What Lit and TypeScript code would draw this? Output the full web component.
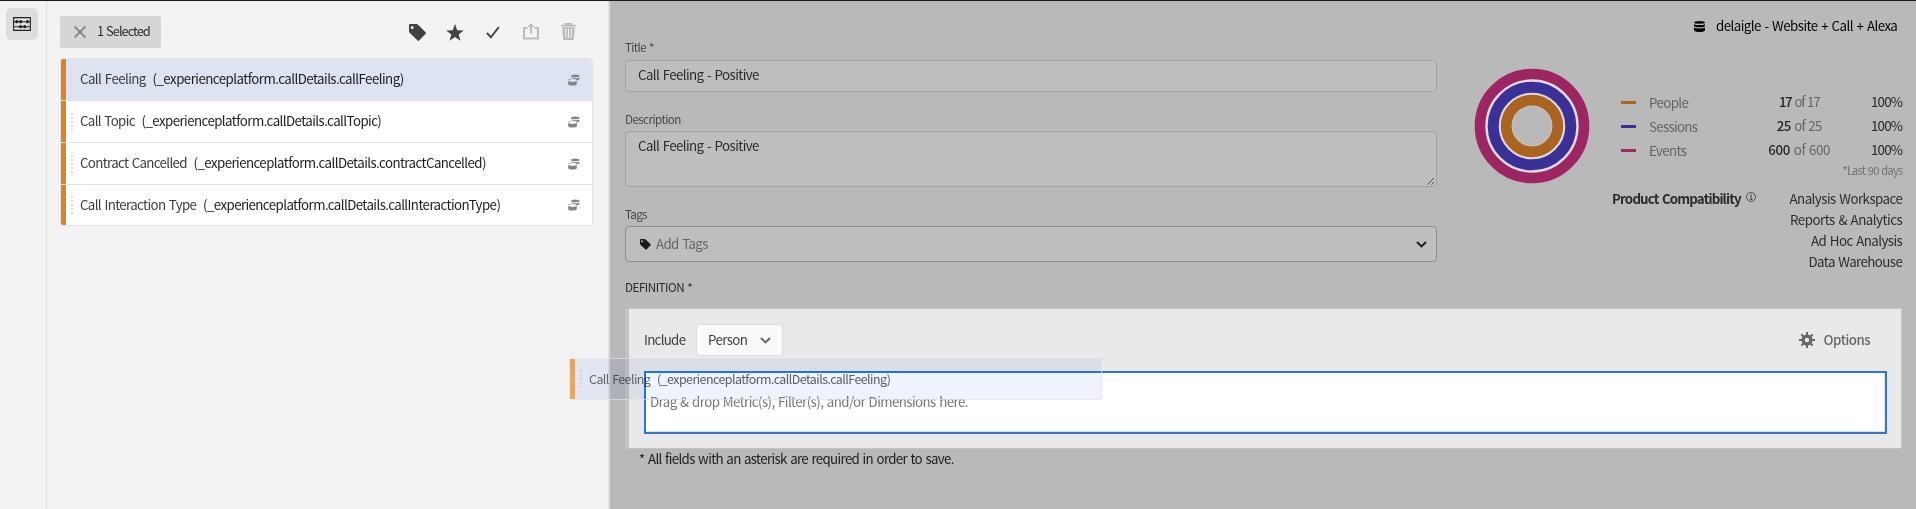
import { LitElement, html, svg, css } from "lit";
import { customElement, property } from "lit/decorators.js";

/** A single-line label whose tracking is adjusted to occupy `w` pixels. */
@customElement("fit-label")
export class FitLabel extends LitElement {
  static styles = css`
    :host { display: block; white-space: pre; flex: none; }
    span { display: inline-block; word-spacing: 1.1px; }
  `;
  @property() text = "";
  @property({ type: Number }) w = 0;
  firstUpdated() {
    const s = this.renderRoot.querySelector("span")!;
    const natural = s.getBoundingClientRect().width;
    s.style.letterSpacing = `${(this.w - natural + 0.3) / this.text.length}px`;
    s.style.width = `${this.w}px`;
  }
  render() {
    return html`<span>${this.text}</span>`;
  }
}

const label = (text: string, w: number, cls = "") =>
  html`<fit-label class=${cls} .text=${text} .w=${w}></fit-label>`;

const tagShape = svg`<path fill-rule="evenodd" d="M0 1.2Q0 0 1.2 0H7.4Q8.2 0 8.8 .6L16.6 8.2Q17.3 9 16.6 9.8L10.2 16.6Q9.4 17.3 8.6 16.6L.6 8.8Q0 8.2 0 7.4ZM3.2 1.9A1.5 1.5 0 1 0 3.2 4.9A1.5 1.5 0 1 0 3.2 1.9Z"/>`;

const icons = {
  abacus: html`<svg width="18" height="14" viewBox="0 0 18 14"><path d="M.6.6H17.4V13.4H.6ZM.6 4.8H17.4M.6 9.7H17.4" fill="none" stroke="#222" stroke-width="1.1"/><g fill="#222"><circle cx="3.8" cy="4.7" r="1.6"/><circle cx="7.7" cy="4.7" r="1.6"/><circle cx="14.5" cy="4.7" r="1.6"/><circle cx="7.7" cy="9.7" r="1.6"/><circle cx="11.7" cy="9.7" r="1.6"/></g></svg>`,
  close: html`<svg width="12" height="12" viewBox="0 0 12 12"><path d="M.7.7L11.3 11.3M11.3.7L.7 11.3" stroke="#7e7e7e" stroke-width="1.7"/></svg>`,
  tag: html`<svg width="17" height="17" viewBox="0 0 17 17" fill="#424242">${tagShape}</svg>`,
  star: html`<svg width="18" height="17" viewBox="0 0 18 17"><path fill="#424242" d="M9 0L11.2 6.2L17.8 6.4L12.6 10.5L14.5 16.8L9 13.1L3.5 16.8L5.4 10.5L.2 6.4L6.8 6.2Z"/></svg>`,
  check: html`<svg width="14" height="13" viewBox="0 0 14 13"><path d="M1 7L4.9 11.3L12.9 1" fill="none" stroke="#424242" stroke-width="2"/></svg>`,
  share: html`<svg width="16" height="17" viewBox="0 0 16 17"><path d="M4.5 4.9H1V15.4H15V4.9H11.5" fill="none" stroke="#bcbcbc" stroke-width="2"/><path d="M8 10.5V3" stroke="#bcbcbc" stroke-width="2"/><path d="M8 0L11.5 4H4.5Z" fill="#bcbcbc"/></svg>`,
  trash: html`<svg width="15" height="17" viewBox="0 0 15 17"><path d="M0 2.6H15M4.6 2V.7H10.4V2" fill="none" stroke="#bababa" stroke-width="1.6"/><path fill="#bababa" fill-rule="evenodd" d="M1.2 4.2H13.8L12.8 16.2Q12.7 17 12 17H3Q2.3 17 2.2 16.2ZM3.9 5.8L4.5 15H5.5L5 5.8ZM6.9 5.8V15H8.1V5.8ZM10 5.8L9.5 15H10.5L11.1 5.8Z"/></svg>`,
  stack: html`<svg width="12" height="12" viewBox="0 0 12 12"><g fill="#858585"><path d="M2.9 2Q3.1.4 7.1.4Q11.5.4 11.5 1.9Q11.5 3.3 7.1 3.3Q2.9 3.3 2.9 2Z"/><path d="M11.5 3.4V5Q11 6.4 8.9 6.6Q8.6 5.3 5.8 4.9L3 4.3V3.5Q4.2 4.3 7.1 4.3Q10.5 4.3 11.5 3.4Z"/><path d="M.2 6.1Q.6 4.9 2.2 4.9L2.6 6Z"/><path d="M.2 6.8Q1.4 7.9 4.4 7.9Q7.8 7.9 8.8 6.8V10.2Q8.4 11.6 4.4 11.6Q.6 11.6.2 10.2Z"/></g></svg>`,
  tagSmall: html`<svg width="11" height="11" viewBox="0 0 17.2 17.2" fill="#1c1c1c">${tagShape}</svg>`,
  chevronDark: html`<svg width="11" height="7" viewBox="0 0 11 7"><path d="M1 1L5.5 5.4L10 1" fill="none" stroke="#1d1d1d" stroke-width="1.9"/></svg>`,
  chevron: html`<svg width="11" height="7" viewBox="0 0 11 7"><path d="M1 1L5.5 5.4L10 1" fill="none" stroke="#6a6a6a" stroke-width="2"/></svg>`,
  database: html`<svg width="11" height="11" viewBox="0 0 11 11"><g fill="#060606"><path d="M0 1.6Q0 0 5.5 0T11 1.6Q11 2.8 5.5 2.8T0 1.6Z"/><path d="M0 3.2Q1.5 4.1 5.5 4.1T11 3.2V5Q10.5 6.3 5.5 6.3T0 5Z"/><path d="M0 6.6Q1.5 7.5 5.5 7.5T11 6.6V9.2Q10.5 11 5.5 11T0 9.2Z"/></g></svg>`,
  info: html`<svg width="10" height="10" viewBox="0 0 10 10"><circle cx="5" cy="5" r="4.5" fill="none" stroke="#3d3d3d" stroke-width=".8"/><path d="M3.9 4.3H5.2V7.4M3.7 7.5H6.5" stroke="#3d3d3d" stroke-width=".9" fill="none"/><circle cx="5" cy="2.7" r=".7" fill="#3d3d3d"/></svg>`,
  gear: html`<svg width="16" height="16" viewBox="0 0 16 16"><g fill="#686868"><path fill-rule="evenodd" d="M8 2.4A5.6 5.6 0 1 0 8 13.6A5.6 5.6 0 1 0 8 2.4ZM8 5.8A2.2 2.2 0 1 1 8 10.2A2.2 2.2 0 1 1 8 5.8Z"/>${[0, 45, 90, 135].map(
    (a) => svg`<path transform=${`rotate(${a} 8 8)`} d="M7 0H9V3H7ZM7 13H9V16H7Z"/>`
  )}</g></svg>`,
  grip: html`<svg width="2" height="18" viewBox="0 0 2 18"><path d="M1 0V18" stroke="#dcdcdc" stroke-width="2" stroke-dasharray="2 2"/></svg>`,
  resize: html`<svg width="8" height="8" viewBox="0 0 8 8"><path d="M.5 7.5L7 1M4.5 7.5L7 5" stroke="#454545" stroke-width=".9"/></svg>`,
};

interface Dim { name: string; nw: number; path: string; pw: number; selected?: boolean }

const dims: Dim[] = [
  { name: "Call Feeling", nw: 65.5, path: "(_experienceplatform.callDetails.callFeeling)", pw: 251, selected: true },
  { name: "Call Topic", nw: 54.5, path: "(_experienceplatform.callDetails.callTopic)", pw: 239.5 },
  { name: "Contract Cancelled", nw: 106.5, path: "(_experienceplatform.callDetails.contractCancelled)", pw: 292 },
  { name: "Call Interaction Type", nw: 116, path: "(_experienceplatform.callDetails.callInteractionType)", pw: 297 },
];

const metrics = [
  { cls: "people", name: "People", w: 39, n: "17", nw: 11.5, of: "of 17", ow: 24.5 },
  { cls: "sessions", name: "Sessions", w: 48, n: "25", nw: 13.5, of: "of 25", ow: 27 },
  { cls: "events", name: "Events", w: 37, n: "600", nw: 21.5, of: "of 600", ow: 36 },
];

const products: [string, number][] = [
  ["Analysis Workspace", 112.5],
  ["Reports & Analytics", 112],
  ["Ad Hoc Analysis", 91],
  ["Data Warehouse", 93.5],
];

@customElement("app-root")
export class AppRoot extends LitElement {
  static styles = css`
    :host {
      display: flex; position: relative; box-sizing: border-box;
      width: 1916px; height: 509px; overflow: hidden;
      border-top: 1px solid #1e1b1e; background: #f3f3f3; color: #2c2c2c;
      font: 13.3px/18px "Noto Sans CJK SC", "Noto Sans", sans-serif;
    }
    * { box-sizing: border-box; }
    svg { display: block; flex: none; }
    .rail { width: 47px; border-right: 1px solid #dfdfdf; padding: 7px 0 0 6px; flex: none; }
    .railbtn { width: 32px; height: 32px; border-radius: 5px; background: #dedede; display: grid; place-items: center; }
    .panel { width: 561px; padding: 15px 15px 0 13px; flex: none; }
    .tools { display: flex; height: 32px; margin-bottom: 10px; align-items: center; }
    .chip { display: flex; align-items: center; width: 101px; height: 32px; padding-left: 14px; gap: 11px; background: #d6d6d6; border-radius: 3px; }
    .chip fit-label { margin-top: -2px; font-size: 12.8px; }
    .actions { display: flex; margin-left: 248px; align-items: center; }
    .actions svg:nth-child(2) { margin-left: 20px; }
    .actions svg:nth-child(3) { margin-left: 22px; }
    .actions svg:nth-child(4) { margin: -1px 0 0 23px; }
    .actions svg:nth-child(5) { margin: -1px 0 0 22px; }
    .list { border: 1px solid #e3e3e3; border-radius: 3px; overflow: hidden; background: #fff; width: 533px; }
    .row { display: flex; align-items: center; height: 42px; padding-right: 12px; border-bottom: 1px solid #e3e3e3; background: #fff; }
    .row:last-child { height: 40px; border-bottom: 0; }
    .bar { width: 5px; height: 41px; align-self: flex-start; background: #e08029; margin-right: 5px; flex: none; }
    .row.sel { background: #dde3f1; }
    .row > svg:last-child { margin-left: auto; }
    .name { margin-left: 7px; margin-right: 7px; margin-top: -1px; color: #3c3c3c; }
    .path { margin-top: -1px; color: #1c1c1c; }
    .main { width: 1308px; border-left: 2px solid #dedede; background: #b9b9b9; padding: 0 14px 0 15px; flex: none; }
    .top { display: grid; grid-template-columns: 812px 1fr; height: 276px; }
    .form { padding-top: 38px; }
    .lab { font-size: 11.6px; line-height: 16px; color: #474747; }
    .field { border: 1px solid #a2a2a2; border-radius: 4px; background: #bebebe; padding-left: 12px; color: #2b2b2b; }
    .title { height: 32px; margin: 5px 0 19px; padding-top: 5px; }
    .area { height: 56px; margin: 4px 0 19px; padding: 5px 1px 1px 12px; display: flex; justify-content: space-between; }
    .area svg { align-self: flex-end; }
    .tags { height: 36px; margin-top: 4px; border-color: #8d8d8d; display: flex; align-items: center; padding: 0 9px 0 14px; }
    .tags fit-label { margin: -1px auto 0 5px; color: #676767; }
    .deflab { font-size: 11.6px; line-height: 16px; margin-top: 2px; color: #2b2b2b; }
    .side { display: grid; grid-template-columns: 170px 1fr; grid-template-rows: 54px 1fr; }
    .suite { grid-column: 1 / 3; display: flex; justify-content: flex-end; align-items: center; gap: 11px; height: 32px; margin-top: 10px; padding-right: 5px; color: #060606; }
    .suite fit-label { margin-top: -2px; }
    .suite svg { margin-top: -2px; }
    .rings { margin: 13px 0 0 37px; }
    .stats { padding-top: 36px; }
    .metric { display: flex; align-items: center; height: 24px; }
    .dash { width: 15px; height: 3px; margin: -1px 13px 0 14px; flex: none; }
    .people .dash { background: #ae6521; }
    .sessions .dash { background: #3a3098; }
    .events .dash { background: #a32766; }
    .metric .mname { color: #646464; width: 91px; margin-right: auto; }
    .vals { display: flex; gap: 4px; justify-content: center; width: 90px; margin: -2px 27px 0 0; color: #666; }
    .vals .num, .pct { color: #242424; font-weight: 500; }
    .pct { margin-top: -2px; font-weight: 400; }
    .foot { display: flex; justify-content: flex-end; font-size: 11.2px; line-height: 16px; color: #717171; margin-top: -1px; }
    .compat { display: flex; margin: 12px 0 0 5px; }
    .compat b { font-weight: 700; color: #2b2b2b; }
    .compat svg { margin: 2px 0 0 5px; }
    .prods { display: flex; flex-direction: column; align-items: flex-end; gap: 3px; margin-left: auto; }
    .def { border: 1px solid #c3c3c3; border-left-width: 4px; background: #e9e9e9; width: 1277px; height: 141px; margin-top: 13px; padding: 15px 14px 14px 15px; }
    .inc { display: flex; align-items: center; height: 32px; margin-bottom: 15px; color: #3d3d3d; }
    .inc > fit-label { margin-top: -1px; }
    .person { display: flex; align-items: center; width: 87px; height: 32px; background: #fafafa; border: 1px solid #dcdcdc; border-radius: 4px; padding: 0 11px; margin-left: 11px; justify-content: space-between; }
    .person fit-label { margin-top: -1px; }
    .opt { display: flex; gap: 9px; margin: 0 17px 0 auto; align-items: center; color: #666; font-weight: 500; }
    .opt fit-label { margin-top: -1px; }
    .drop { border: 2px solid #2f77cb; background: #fff; height: 63px; padding: 20px 0 0 4px; color: #757575; box-shadow: inset -1px -1px #e1e1e1; }
    .note { margin: 1px 0 0 14px; color: #1b1b1b; }
    .ghost { position: absolute; left: 569px; top: 357px; width: 533px; height: 42px; border: 1px solid rgba(222, 224, 225, .7); border-radius: 3px; }
    .ghost .row { height: 40px; border: 0; background: #eff3fd; font-size: 12.4px; mix-blend-mode: multiply; }
    .ghost .bar { background: #f3ad6b; height: 40px; }
    .ghost .name { margin-top: -1px; color: #6c6c6c; }
    .ghost .path { margin-top: -1px; color: #5c5c5c; }
  `;

  render() {
    return html`
      <nav class="rail"><div class="railbtn">${icons.abacus}</div></nav>
      <section class="panel">
        <div class="tools">
          <div class="chip">${icons.close}${label("1 Selected", 52.5)}</div>
          <div class="actions">${icons.tag}${icons.star}${icons.check}${icons.share}${icons.trash}</div>
        </div>
        <div class="list">
          ${dims.map(
            (d) => html`<div class="row ${d.selected ? "sel" : ""}">
              <div class="bar"></div>${icons.grip}${label(d.name, d.nw, "name")}${label(d.path, d.pw, "path")}${icons.stack}
            </div>`
          )}
        </div>
      </section>
      <main class="main">
        <div class="top">
          <div class="form">
            ${label("Title *", 28.5, "lab")}
            <div class="field title">${label("Call Feeling - Positive", 120.5)}</div>
            ${label("Description", 55.5, "lab")}
            <div class="field area">${label("Call Feeling - Positive", 120.5)}${icons.resize}</div>
            ${label("Tags", 21.5, "lab")}
            <div class="field tags">${icons.tagSmall}${label("Add Tags", 51.5)}${icons.chevronDark}</div>
          </div>
          <aside class="side">
            <div class="suite">${icons.database}${label("delaigle - Website + Call + Alexa", 181)}</div>
            <svg class="rings" width="116" height="116" viewBox="0 0 116 116" fill="none">
              <circle cx="58" cy="58" r="46" stroke="#dcdcdc" stroke-width="4" />
              <circle cx="58" cy="58" r="32.5" stroke="#dcdcdc" stroke-width="4" />
              <circle cx="58" cy="58" r="20.4" stroke="#c6c6c6" stroke-width="2" />
              <circle cx="58" cy="58" r="52" stroke="#9d2662" stroke-width="10.6" />
              <circle cx="58" cy="58" r="38.8" stroke="#3a3098" stroke-width="11" />
              <circle cx="58" cy="58" r="25.8" stroke="#ab6320" stroke-width="10.8" />
            </svg>
            <div class="stats">
              ${metrics.map(
                (m) => html`<div class="metric ${m.cls}">
                  <div class="dash"></div>${label(m.name, m.w, "mname")}
                  <div class="vals">${label(m.n, m.nw, "num")}${label(m.of, m.ow)}</div>
                  ${label("100%", 31, "pct")}
                </div>`
              )}
              <div class="foot">${label("*Last 90 days", 59.5)}</div>
              <div class="compat">
                <b>${label("Product Compatibility", 128.5)}</b>${icons.info}
                <div class="prods">${products.map(([p, w]) => label(p, w))}</div>
              </div>
            </div>
          </aside>
        </div>
        ${label("DEFINITION *", 67, "deflab")}
        <section class="def">
          <div class="inc">
            ${label("Include", 41)}
            <div class="person">${label("Person", 39)}${icons.chevron}</div>
            <div class="opt">${icons.gear}${label("Options", 46.5)}</div>
          </div>
          <div class="drop">${label("Drag & drop Metric(s), Filter(s), and/or Dimensions here.", 317.5)}</div>
        </section>
        <div class="note">${label("* All fields with an asterisk are required in order to save.", 314.5)}</div>
      </main>
      <div class="ghost">
        <div class="row"><div class="bar"></div>${icons.grip}${label("Call Feeling", 61, "name")}${label("(_experienceplatform.callDetails.callFeeling)", 233, "path")}</div>
      </div>
    `;
  }
}
